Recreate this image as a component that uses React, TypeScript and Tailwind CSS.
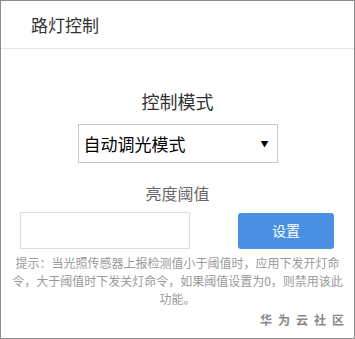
import React from "react";

export default function App() {
  return (
    <div
      className="w-[355px] h-[339px] border border-[#8c8c8c] bg-white flex flex-col overflow-hidden"
      style={{ fontFamily: '"Microsoft YaHei", "Noto Sans CJK SC", sans-serif' }}
    >
      <div className="h-[48px] border-b border-[#e5e5e5] flex items-center pl-[30px] mx-0">
        <span className="text-[17px] text-[#333]">路灯控制</span>
      </div>
      <div className="flex flex-col items-center pt-[40px]">
        <div className="text-[18px] leading-[24px] text-[#333]">控制模式</div>
        <div className="mt-[11px] w-[200px] h-[39px] border border-[#c8c8c8] flex items-center justify-between pl-[5px] pr-[8px]">
          <span className="text-[17px] text-black">自动调光模式</span>
          <span className="text-[8px] text-black">▼</span>
        </div>
        <div className="mt-[19px] text-[16px] leading-[22px] text-[#666]">亮度阈值</div>
      </div>
      <div className="flex items-center justify-between pl-[19px] pr-[20px] mt-[8px]">
        <div className="w-[170px] h-[37px] border border-[#ddd]" />
        <div className="w-[96px] h-[36px] bg-[#4a90e2] rounded-[3px] flex items-center justify-center text-white text-[14px]">
          设置
        </div>
      </div>
      <div className="px-[10px] mt-[5px] text-center text-[12px] leading-[18px] text-[#999]">
        提示：当光照传感器上报检测值小于阈值时，应用下发开灯命令，大于阈值时下发关灯命令，如果阈值设置为0，则禁用该此功能。
      </div>
      <div className="flex justify-end pr-[4px] mt-[3px]">
        <span className="text-[12px] font-bold text-[#888] tracking-[6px]">华为云社区</span>
      </div>
    </div>
  );
}
